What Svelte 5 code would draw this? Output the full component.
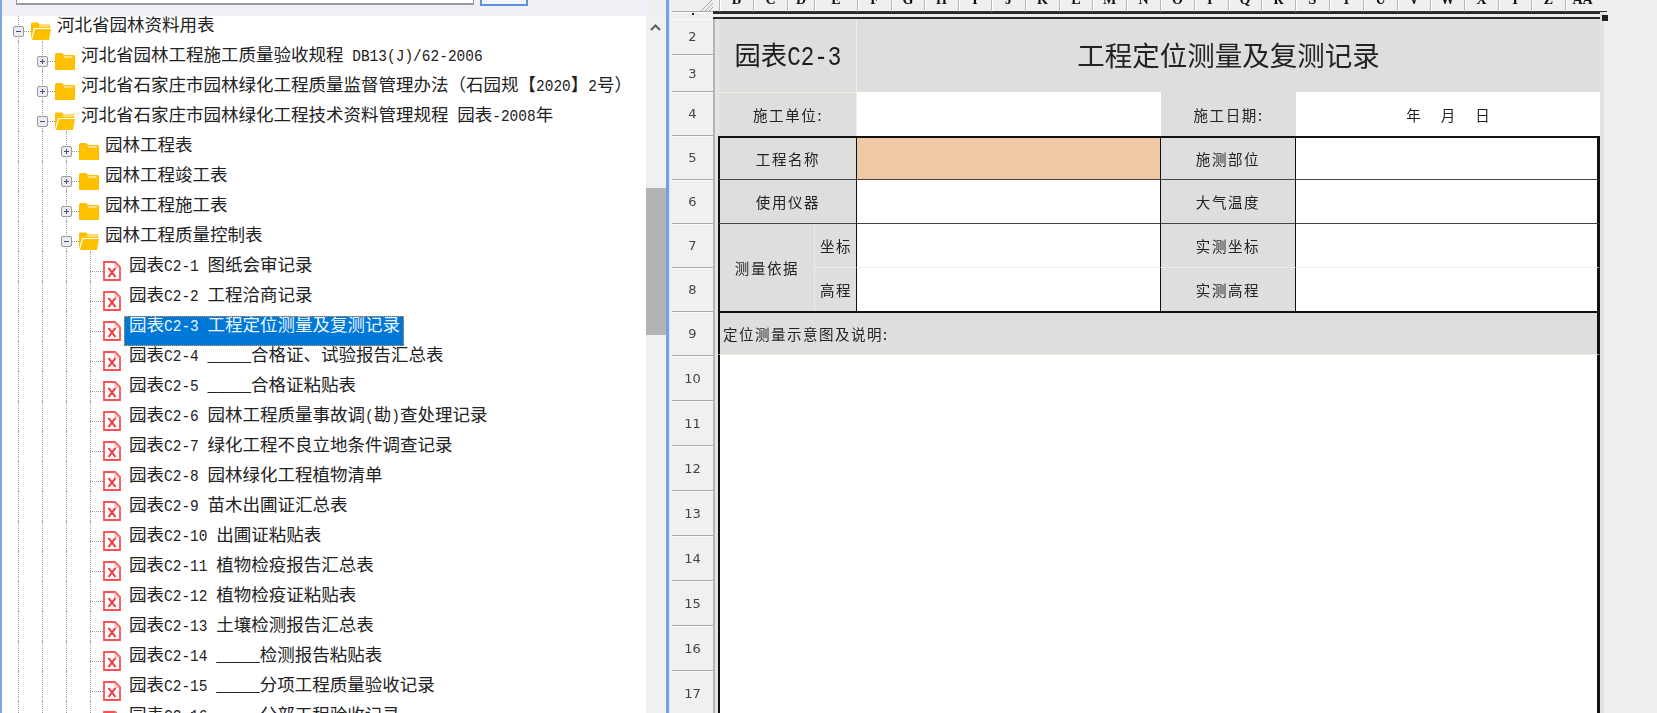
<script>
  const cols = [
    ['B', 34], ['C', 34], ['D', 27], ['E', 43], ['F', 34], ['G', 33], ['H', 34], ['I', 33], ['J', 34],
    ['K', 34], ['L', 33], ['M', 34], ['N', 34], ['O', 34], ['P', 34], ['Q', 33], ['R', 34], ['S', 34],
    ['T', 34], ['U', 34], ['V', 33], ['W', 34], ['X', 34], ['Y', 33], ['Z', 34], ['AA', 34]
  ];
  const rowNums = [[2, 36], [3, 37], [4, 44], [5, 44], [6, 44], [7, 44], [8, 44], [9, 44], [10, 45], [11, 45], [12, 45], [13, 45], [14, 45], [15, 45], [16, 45], [17, 45]];

  const leaves = [
    '园表C2-1 图纸会审记录', '园表C2-2 工程洽商记录', '园表C2-3 工程定位测量及复测记录',
    '园表C2-4 _____合格证、试验报告汇总表', '园表C2-5 _____合格证粘贴表',
    '园表C2-6 园林工程质量事故调(勘)查处理记录', '园表C2-7 绿化工程不良立地条件调查记录',
    '园表C2-8 园林绿化工程植物清单', '园表C2-9 苗木出圃证汇总表', '园表C2-10 出圃证粘贴表',
    '园表C2-11 植物检疫报告汇总表', '园表C2-12 植物检疫证粘贴表', '园表C2-13 土壤检测报告汇总表',
    '园表C2-14 _____检测报告粘贴表', '园表C2-15 _____分项工程质量验收记录', '园表C2-16 _____分部工程验收记录'
  ];
  const rows = [
    { level: 0, kind: 'open', text: '河北省园林资料用表', guides: [0] },
    { level: 1, kind: 'closed', text: '河北省园林工程施工质量验收规程 DB13(J)/62-2006', guides: [0, 1] },
    { level: 1, kind: 'closed', text: '河北省石家庄市园林绿化工程质量监督管理办法（石园规【2020】2号）', guides: [0, 1] },
    { level: 1, kind: 'open', text: '河北省石家庄市园林绿化工程技术资料管理规程 园表-2008年', guides: [0, 1] },
    { level: 2, kind: 'closed', text: '园林工程表', guides: [0, 1, 2] },
    { level: 2, kind: 'closed', text: '园林工程竣工表', guides: [0, 1, 2] },
    { level: 2, kind: 'closed', text: '园林工程施工表', guides: [0, 1, 2] },
    { level: 2, kind: 'open', text: '园林工程质量控制表', guides: [0, 1, 2] },
    ...leaves.map((text, i) => ({ level: 3, kind: 'leaf', text, guides: [0, 1, 2, 3], selected: i === 2 }))
  ];

  function parts(s) {
    return s.split(/([\x20-\x7e]+)/).filter(Boolean).map((t) => ({ t, latin: /^[\x20-\x7e]/.test(t) }));
  }
  const indent = (l) => 24 * l;
</script>

<div class="page">
  <section class="left">
    <div class="tree-pane">
      <div class="search">
        <div class="search-input"></div>
        <div class="search-btn"></div>
      </div>
      <div class="tree">
        {#each rows as r}
          <div class="row">
            {#each r.guides as g}
              <span class="guide" style="left:{18 + 24 * g}px"></span>
            {/each}
            <span class="stub" style="left:{18 + indent(r.level)}px"></span>
            {#if r.kind !== 'leaf'}
              <span class="exp" style="left:{13 + indent(r.level)}px">
                <svg width="11" height="11" viewBox="0 0 11 11">
                  <rect x="0.5" y="0.5" width="10" height="10" rx="1.5" fill="#ececf0" stroke="#9a9a9a" />
                  <path d={r.kind === 'open' ? 'M3 5.5h5' : 'M3 5.5h5M5.5 3v5'} stroke="#3d4f8c" stroke-width="1" fill="none" />
                </svg>
              </span>
            {/if}
            <span class="icon" style="margin-left:{31 + indent(r.level)}px">
              {#if r.kind === 'closed'}
                <svg width="20" height="18" viewBox="0 0 20 18">
                  <path d="M0 2.5 Q0 1 1.5 1 H7 L9 3 H18.500 Q20 3 20 4.500 V18 H0 Z" fill="#ffc000" />
                  <path d="M9 5 H17.500" stroke="#fff" stroke-width="1" />
                </svg>
              {:else if r.kind === 'open'}
                <svg width="20" height="18" viewBox="0 0 20 18">
                  <path d="M0 2 Q0 0.500 1.500 0.500 H7 L9 2.500 H19 V6 H3 L0 17 Z" fill="#ffc000" />
                  <path d="M8 4 H18" stroke="#fff" stroke-width="1" />
                  <path d="M1 18 L4 7 H20 L18 18 Z" fill="#ffc000" />
                </svg>
              {:else}
                <svg class="doc" width="18" height="20" viewBox="0 0 18 20">
                  <path d="M1 1 H12 L17 6 V19 H1 Z" fill="#fff" stroke="#ff5050" stroke-width="1.800" />
                  <path d="M12 1.500 V6 H16.500" fill="none" stroke="#ff9a9a" stroke-width="1" />
                  <path d="M5.500 7 L12.500 16 M12.500 7 L5.500 16" stroke="#f53030" stroke-width="2" />
                </svg>
              {/if}
            </span>
            <span class="label" class:selected={r.selected}>
              {#each parts(r.text) as p}
                {#if p.latin}<span class="latin">{p.t}</span>{:else}{p.t}{/if}
              {/each}
            </span>
          </div>
        {/each}
      </div>
    </div>
    <div class="scrollbar">
      <svg class="chev" width="11" height="7" viewBox="0 0 11 7">
        <path d="M1 6 L5.500 1.500 L10 6" fill="none" stroke="#606060" stroke-width="2" />
      </svg>
      <div class="thumb"></div>
    </div>
  </section>

  <div class="split"></div>

  <section class="sheet">
    <div class="colhead">
      <div class="corner">
        <svg width="13" height="11" viewBox="0 0 13 11">
          <path d="M1 11 L12 0 M5 11 L13 3 M9 11 L13 7" stroke="#a8a8a8" stroke-width="1" />
        </svg>
      </div>
      <div class="col-a"></div>
      {#each cols as [c, w]}
        <div class="col" style="width:{w}px"><span>{c}</span></div>
      {/each}
      <div class="col-end"></div>
    </div>

    <div class="sheet-body">
      <div class="rownums">
        <div class="rn rn1"><i></i></div>
        {#each rowNums as [n, h]}
          <div class="rn" style="height:{h}px">{n}</div>
        {/each}
      </div>
      <div class="strip"></div>

      <div class="table-wrap">
        <div class="top-row"></div>
        <div class="form">
          <div class="c gray hl-r code"><span>园表<span class="latin code-l">C2-3</span></span></div>
          <div class="c gray title">工程定位测量及复测记录</div>

          <div class="c gray hl-r lbl r4a">施工单位:</div>
          <div class="c white"></div>
          <div class="c gray lbl">施工日期:</div>
          <div class="c white date"><span>年</span><span>月</span><span>日</span></div>

          <div class="c gray lbl sec b-t b-l b-r b-b">工程名称</div>
          <div class="c orange b-t b-r b-b"></div>
          <div class="c gray lbl b-t b-r b-b">施测部位</div>
          <div class="c white b-t b-r2 b-b"></div>

          <div class="c gray lbl sec b-l b-r b-b">使用仪器</div>
          <div class="c white b-r b-b"></div>
          <div class="c gray lbl b-r b-b">大气温度</div>
          <div class="c white b-r2 b-b"></div>

          <div class="c gray lbl basis b-l">测量依据</div>
          <div class="c gray lbl coord cream-l b-r cream-b">坐标</div>
          <div class="c white b-r cream-b"></div>
          <div class="c gray lbl b-r cream-b">实测坐标</div>
          <div class="c white b-r2 cream-b"></div>

          <div class="c gray lbl coord cream-l b-r">高程</div>
          <div class="c white b-r"></div>
          <div class="c gray lbl b-r">实测高程</div>
          <div class="c white b-r2"></div>

          <div class="c gray lbl note b-l b-r2 b-t2">定位测量示意图及说明:</div>
          <div class="c white blank b-l b-r2"></div>
        </div>
      </div>
      <div class="right-strip"></div>
      <div class="handle"></div>
    </div>
  </section>
</div>

<style>
  :global(body) { margin: 0; background: #efefef; }
  .page {
    display: flex;
    width: 1657px;
    height: 713px;
    overflow: hidden;
    font-family: "Noto Sans CJK SC", "Liberation Sans", sans-serif;
    color: #222;
    filter: blur(0.35px);
  }
  .left { display: flex; width: 666px; flex: none; border-left: 2px solid #7fa6de; box-sizing: border-box; }
  .tree-pane { flex: 1; min-width: 0; display: flex; flex-direction: column; background: #fff; }
  .search { height: 16px; flex: none; background: #f0f0f6; display: flex; gap: 6px; align-items: flex-start; padding-left: 14px; box-sizing: border-box; position: relative; z-index: 2; }
  .search-input { width: 458px; height: 5px; box-sizing: border-box; background: #fff; border: 1px solid #9a9a9a; border-width: 0 1px 2px; }
  .search-btn { width: 48px; height: 6px; box-sizing: border-box; background: #f2f6fc; border: 2px solid #5b93db; border-top: 0; }
  .tree { flex: 1; overflow: hidden; margin-top: -5px; position: relative; }
  .row { height: 30px; display: flex; position: relative; font-size: 17.5px; line-height: 16px; white-space: nowrap; }
  .guide { position: absolute; top: 0; bottom: 0; width: 0; border-left: 1px dotted #9a9a9a; margin-left: -2px; }
  .stub { position: absolute; top: 20px; width: 13px; height: 0; border-top: 1px dotted #9a9a9a; margin-left: -2px; }
  .exp { position: absolute; top: 15px; margin-left: -2px; height: 11px; line-height: 0; background: #fff; }
  .icon { position: relative; flex: none; width: 20px; padding-top: 11px; height: 19px; line-height: 0; margin-right: 6px; transform: translateX(-2px); }
  .doc { margin-top: -1px; }
  .label { margin-left: -2px; padding: 0 4px 0 5px; margin-top: 5px; height: 30px; box-sizing: border-box; position: relative; left: -5px; }
  .label.selected { background: #0078d7; color: #e8f3ff; outline: 1px dotted #e8903c; outline-offset: -1px; }
  .latin { display: inline-block; font-family: "Liberation Mono", monospace; font-size: 14.5px; white-space: pre; transform: scaleY(1.2); transform-origin: 0 75%; }

  .scrollbar { flex: none; width: 20px; background: #f0f0f0; position: relative; margin-top: 16px; }
  .chev { position: absolute; left: 4px; top: 8px; }
  .thumb { position: absolute; top: 172px; left: 0; width: 20px; height: 147px; background: #b3b3b3; }

  .split { flex: none; width: 3px; background: #6fa3e4; box-shadow: 1px 0 0 #dfe8f5; }

  .sheet { flex: 1; display: flex; flex-direction: column; min-width: 0; margin-left: 3px; }
  .colhead { display: flex; height: 12px; flex: none; background: #efefef; }
  .corner { width: 41px; height: 12px; flex: none; display: flex; justify-content: flex-end; box-sizing: border-box; border-bottom: 1px solid #a9a9a9; }
  .col-a { width: 6px; flex: none; height: 12px; box-sizing: border-box; border-bottom: 1px solid #333; }
  .col { flex: none; box-sizing: border-box; border-left: 1px solid #b8b8b8; border-bottom: 1px solid #333; height: 12px; overflow: hidden; text-align: center; position: relative; box-shadow: inset 1px 0 0 #fff; }
  .col span { position: absolute; left: 0; right: 0; top: -7px; font: bold 14px/14px "Liberation Serif", serif; color: #111; }
  .col-end { width: 8px; flex: none; height: 12px; box-sizing: border-box; border-bottom: 1px solid #333; }

  .sheet-body { flex: 1; display: flex; min-height: 0; position: relative; }
  .rownums { width: 41px; flex: none; }
  .rn { box-sizing: border-box; display: flex; align-items: center; justify-content: center; font: 13px "DejaVu Sans", sans-serif; color: #444; background: #f0f0f0; border-bottom: 1px solid #a9a9a9; box-shadow: inset 0 1px 0 #fafafa; }
  .rn1 { height: 7px; border-bottom: 0; align-items: flex-start; padding-top: 1px; }
  .rn1 i { width: 2px; height: 2px; background: #222; display: block; }
  .strip { width: 6px; flex: none; background: #e4e4e4; border-left: 2px solid #b5b5b5; box-sizing: border-box; }

  .table-wrap { width: 881px; flex: none; display: flex; flex-direction: column; }
  .top-row { height: 7px; flex: none; box-sizing: border-box; background: #ececec; border-bottom: 2px solid #2a2a2a; border-top: 2px solid #2a2a2a; margin-left: -6px; margin-right: -5px; }
  .form {
    flex: 1;
    display: grid;
    grid-template-columns: 95px 43px 304px 135px 304px;
    grid-template-rows: 73px 44px 44px 44px 44px 43px 44px 1fr;
  }
  .c { display: flex; align-items: center; justify-content: center; box-sizing: border-box; }
  .gray { background: #dedede; }
  .white { background: #fff; }
  .orange { background: #f0c8a6; }
  .lbl { font-size: 14.5px; letter-spacing: 1.6px; }
  .hl-r { box-shadow: inset -1px 0 0 #eeeedd; }
  .code { grid-column: 1 / span 2; font-size: 26.3px; color: #1c1c1c; padding-bottom: 4px; }
  .code-l { font-size: 22.6px; transform-origin: 0 78%; }
  .title { grid-column: 3 / span 3; font-size: 27.5px; color: #222; padding-bottom: 4px; }
  .r4a { grid-column: 1 / span 2; box-shadow: inset -1px 0 0 #eeeedd, inset 0 1px 0 #eeeedd; }
  .sec { grid-column: 1 / span 2; }
  .date { font-size: 14.5px; gap: 20px; }
  .b-t { border-top: 2px solid #111; }
  .b-t2 { border-top: 2px solid #111; }
  .b-l { border-left: 2px solid #111; margin-left: -1px; }
  .b-r { border-right: 1px solid #111; }
  .b-r2 { border-right: 3px solid #111; }
  .b-b { border-bottom: 1px solid #444; }
  .cream-b { border-bottom: 1px solid #f0f0e2; }
  .cream-l { border-left: 1px solid #eeeedd; }
  .basis { grid-row: span 2; }
  .coord { padding-left: 1px; }
  .note { grid-column: 1 / -1; justify-content: flex-start; padding-left: 3px; border-bottom: 1px solid #eeeedd; letter-spacing: 1.5px; }
  .blank { grid-column: 1 / -1; }
  .right-strip { width: 5px; flex: none; background: #e0e0e0; border-right: 1px solid #eeeedd; box-sizing: border-box; }
  .handle { position: absolute; left: 930px; top: 3px; width: 6px; height: 6px; background: #222; }
</style>
